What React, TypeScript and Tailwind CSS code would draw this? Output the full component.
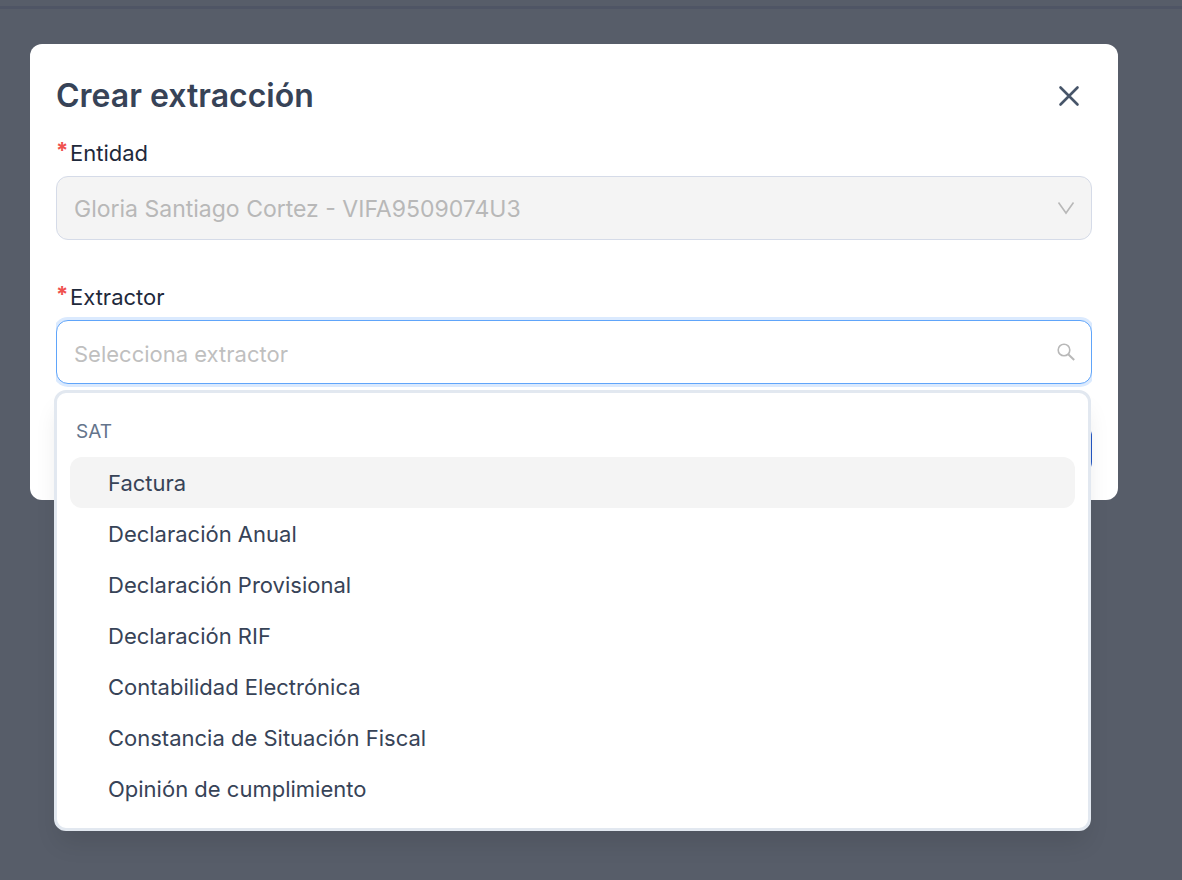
import React, { useState } from 'react';

const EXTRACTORS = [
  'Factura',
  'Declaración Anual',
  'Declaración Provisional',
  'Declaración RIF',
  'Contabilidad Electrónica',
  'Constancia de Situación Fiscal',
  'Opinión de cumplimiento',
];

const ENTITY = 'Gloria Santiago Cortez - VIFA9509074U3';

function FieldLabel({ htmlFor, children }: { htmlFor: string; children: React.ReactNode }) {
  return (
    <label htmlFor={htmlFor} className="flex h-9 gap-0.5 text-[22px] leading-[38px] text-[#1e293b]">
      <span className="w-3 text-[22px] leading-8 font-bold text-[#f0524f]">*</span>
      {children}
    </label>
  );
}

export default function App() {
  const [query, setQuery] = useState('');
  const [active, setActive] = useState(0);

  return (
    <div className="min-h-screen bg-[#575d69] pt-1.5 font-['Inter',sans-serif]">
      {/* Edge of the page header under the overlay */}
      <div className="h-[3px] bg-[#4f5565]" />

      <div className="pt-[35px] pr-16 pb-12 pl-[30px]">
        <div role="dialog" aria-labelledby="dialog-title" className="rounded-xl bg-white p-[26px]">
          <div className="flex h-[52px] items-center justify-between pr-2.5">
            <h1 id="dialog-title" className="text-[32px] leading-10 font-semibold text-[#374357]">
              Crear extracción
            </h1>
            <button type="button" aria-label="Cerrar" className="flex size-[26px] items-center justify-center">
              <svg viewBox="0 0 26 26" className="size-[26px]" fill="none" stroke="#475569" strokeWidth="2.6" strokeLinecap="round">
                <path d="M4.5 4.5 21.5 21.5M21.5 4.5 4.5 21.5" />
              </svg>
            </button>
          </div>

          <form onSubmit={(e) => e.preventDefault()} className="pt-3">
            <FieldLabel htmlFor="entity">Entidad</FieldLabel>
            <div className="mt-1.5 grid items-center">
              <select
                id="entity"
                disabled
                className="col-start-1 row-start-1 h-16 w-full appearance-none rounded-xl border border-[#d5dbe8] bg-[#f4f4f4] px-[17px] pt-0.5 text-[23px] text-[#b8b8b8] opacity-100"
              >
                <option>{ENTITY}</option>
              </select>
              <svg viewBox="0 0 18 14" className="pointer-events-none col-start-1 row-start-1 mr-[17px] h-3.5 w-[18px] justify-self-end" fill="none" stroke="#b8b8b8" strokeWidth="1.6">
                <path d="M1.5 1.5 9 12 16.5 1.5" />
              </svg>
            </div>

            <div className="relative mt-[38px]">
              <FieldLabel htmlFor="extractor">Extractor</FieldLabel>
              <div className="overflow-hidden py-1.5">
                <div className="grid items-center">
                  <input
                    id="extractor"
                    type="text"
                    role="combobox"
                    aria-expanded="true"
                    aria-controls="extractor-list"
                    placeholder="Selecciona extractor"
                    value={query}
                    onChange={(e) => setQuery(e.target.value)}
                    className="col-start-1 row-start-1 h-16 w-full rounded-xl border border-[#60a5fa] bg-white pt-[3px] pr-14 pl-[17px] text-[22px] text-[#374357] ring-3 ring-[#dbeafe] outline-none placeholder:text-[#bfbfbf]"
                  />
                  <svg viewBox="0 0 18 18" className="pointer-events-none col-start-1 row-start-1 mr-[17px] size-[18px] justify-self-end" fill="none" stroke="#b8b8b8" strokeWidth="1.6">
                    <circle cx="7" cy="7" r="5.8" />
                    <path d="M11.2 11.2 17.2 17" strokeWidth="2" />
                  </svg>
                </div>
              </div>

              <div className="absolute top-full right-px -left-0.5 z-10 rounded-xl border-3 border-[#e2e8f0] bg-white px-[13px] pt-[13px] pb-3.5 shadow-[0_16px_24px_-5px_rgba(0,0,0,0.1)]">
                <div className="h-[51px] px-1.5 text-[19px] leading-[51px] text-[#64748b]">SAT</div>
                <ul id="extractor-list" role="listbox" aria-label="SAT">
                  {EXTRACTORS.map((name, idx) => (
                    <li
                      key={name}
                      role="option"
                      aria-selected={idx === active}
                      onMouseEnter={() => setActive(idx)}
                      className={`h-[51px] rounded-xl pr-4 pl-[38px] text-[22px] leading-[53px] text-[#374357] ${
                        idx === active ? 'bg-[#f4f4f4]' : ''
                      }`}
                    >
                      {name}
                    </li>
                  ))}
                </ul>
              </div>
            </div>

            <div className="mt-[34px] flex justify-end">
              <button type="submit" className="h-[50px] rounded-xl bg-[#2457c5] px-6 text-[22px] text-white">
                Crear
              </button>
            </div>
          </form>
        </div>
      </div>
    </div>
  );
}
